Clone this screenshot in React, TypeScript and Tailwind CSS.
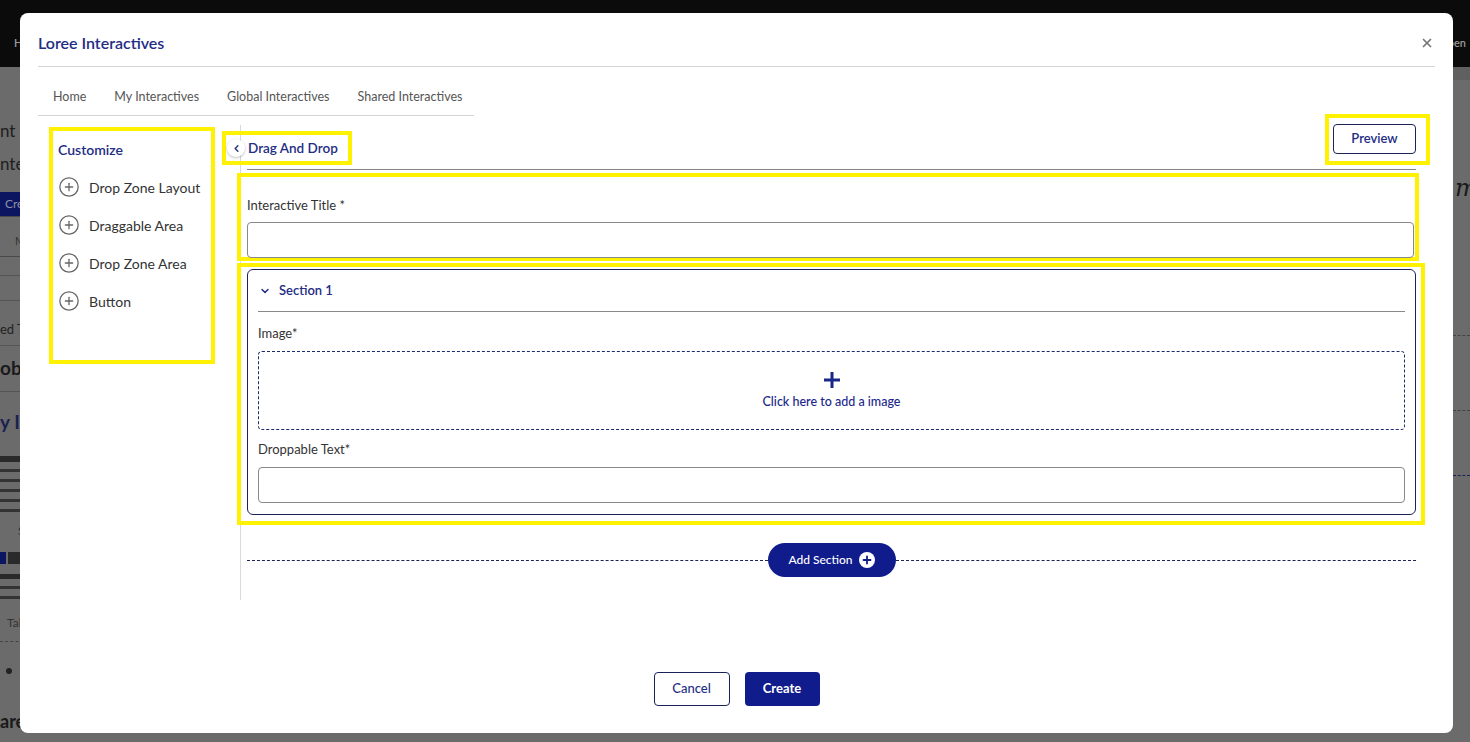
import { ChevronDown, ChevronLeft, CirclePlus, X } from 'lucide-react';

const CUSTOMIZE_ITEMS = ['Drop Zone Layout', 'Draggable Area', 'Drop Zone Area', 'Button'];
const TABS = ['Home', 'My Interactives', 'Global Interactives', 'Shared Interactives'];

function PageBehind() {
  return (
    <div className="flex h-full flex-col">
      <div className="flex h-[67px] shrink-0 items-end justify-between bg-[#0b0b0b] px-[14px] pb-[16px] text-[11px] font-semibold text-[#9a9a9a]">
        <span>H</span>
        <span className="-mr-[10px]">Open</span>
      </div>
      <div className="flex flex-1">
        <div className="flex w-[60px] flex-col text-[#1e1e1e]">
          <div className="mt-[52px] h-[24px] text-[17px] leading-[24px]">nt</div>
          <div className="mt-[8px] h-[26px] text-[17px] leading-[26px]">nte</div>
          <div className="mt-[15px] flex h-[24px] items-center bg-[#0c1660] pl-[5px] text-[12px] text-[#8b8fa8]">Create</div>
          <div className="h-[41px] border-y border-[#4a4a4a] pl-[15px] pt-[16px] text-[11px] text-[#333]">M</div>
          <div className="mt-[18px] h-[26px] border-y border-[#555]" />
          <div className="h-[45px] border-b border-[#555] pt-[20px] text-[13px] leading-[16px] text-[#222]">ed T</div>
          <div className="h-[46px] border-b border-[#555] pt-[9px] text-[19px] font-bold leading-[26px] text-[#1a1a1a]">oba</div>
          <div className="h-[57px] pt-[17px] text-[19px] font-bold leading-[26px] text-[#1b2150]">y Int</div>
          <div className="mt-[7px] flex flex-col gap-[7px]">
            <div className="h-[6px] bg-[#2a2a2a]" />
            <div className="h-[3px] bg-[#333]" />
            <div className="h-[3px] bg-[#333]" />
            <div className="h-[3px] bg-[#333]" />
            <div className="h-[3px] bg-[#333]" />
            <div className="h-[3px] bg-[#333]" />
          </div>
          <div className="mt-[10px] h-[30px] pl-[18px] text-[12px] text-[#333]">S</div>
          <div className="flex h-[12px] gap-[2px]">
            <div className="w-[6px] bg-[#0c1660]" />
            <div className="flex-1 bg-[#2a2a2a]" />
          </div>
          <div className="mt-[10px] flex flex-col gap-[7px]">
            <div className="h-[5px] bg-[#2a2a2a]" />
            <div className="h-[3px] bg-[#333]" />
            <div className="h-[3px] bg-[#333]" />
          </div>
          <div className="mt-[12px] h-[24px] pl-[7px] text-[12px] leading-[24px] text-[#333]">Tab</div>
          <div className="mt-[6px] border-t border-dashed border-[#444]" />
          <div className="mt-[26px] ml-[6px] h-[6px] w-[6px] rounded-full bg-[#222]" />
          <div className="mt-[34px] text-[18px] font-bold text-[#1a1a1a]">are</div>
        </div>
        <div className="flex-1" />
        <div className="flex w-[17px] flex-col">
          <div className="h-[13px] bg-[#606060]" />
          <div className="mt-[96px] pl-[2px] font-['DejaVu_Serif',serif] text-[24px] italic leading-[24px] text-[#1a1a1a]">m</div>
          <div className="mt-[135px] border-t border-dashed border-[#444]" />
          <div className="mt-[74px] border-t border-dashed border-[#444]" />
          <div className="mt-[64px] border-t border-dashed border-[#1b2150]" />
        </div>
      </div>
    </div>
  );
}

function AddIcon() {
  return (
    <svg width="16" height="16" viewBox="0 0 16 16" className="shrink-0">
      <circle cx="8" cy="8" r="8" fill="#ffffff" />
      <path d="M8 4.5v7M4.5 8h7" stroke="#101c8c" strokeWidth="1.8" strokeLinecap="round" />
    </svg>
  );
}

export default function App() {
  return (
    <div className="relative h-[742px] w-[1470px] overflow-hidden bg-[#6b6b6b] font-['Lato',sans-serif]">
      <PageBehind />

      <div className="absolute left-[20px] top-[13px] flex h-[720px] w-[1433px] flex-col rounded-[8px] bg-white">
        <div className="mx-[18px] flex h-[54px] shrink-0 items-end justify-between border-b border-[#d4d4d4] pb-[13px]">
          <h1 className="text-[16px] font-semibold leading-[20px] text-[#232d84]">Loree Interactives</h1>
          <X className="mb-[3px] mr-[1px] h-[14px] w-[14px] text-[#777]" strokeWidth={3} />
        </div>

        <div className="ml-[18px] flex h-[49px] w-[436px] shrink-0 items-end border-b border-[#d4d4d4] pb-[10px] pl-[1px]">
          {TABS.map((tab) => (
            <span key={tab} className="shrink-0 whitespace-nowrap px-[14px] text-[12.5px] leading-[16px] text-[#555]">
              {tab}
            </span>
          ))}
        </div>

        <div className="mx-[18px] flex">
          <div className="w-[202px] shrink-0 pl-[11px] pt-[11px]">
            <div className="h-[237px] w-[166px] border-4 border-[#fff200] pl-[5px] pt-[9px]">
              <h2 className="text-[14px] font-semibold leading-[20px] text-[#232d84]">Customize</h2>
              <ul className="mt-[16px] flex flex-col gap-[16px]">
                {CUSTOMIZE_ITEMS.map((item) => (
                  <li key={item} className="flex h-[22px] items-center gap-[9px]">
                    <CirclePlus className="h-[22px] w-[22px] text-[#666]" strokeWidth={1.4} />
                    <span className="text-[14px] text-[#333]">{item}</span>
                  </li>
                ))}
              </ul>
            </div>
          </div>

          <div className="mt-[9px] h-[475px] flex-1 border-l border-[#d9d9d9] pl-[6px] pr-[19px]">
            <div className="flex h-[45px] items-start justify-between border-b border-[#888]">
              <div className="-ml-[25px] mt-[6px] flex h-[34px] w-[130px] items-center gap-[3px] border-4 border-[#fff200] pl-[1px]">
                <span className="flex h-[18px] w-[18px] items-center justify-center rounded-full bg-white shadow-[0_1px_3px_rgba(0,0,0,0.25)]">
                  <ChevronLeft className="h-[11px] w-[11px] text-[#232d84]" strokeWidth={3} />
                </span>
                <span className="text-[13.5px] font-semibold text-[#232d84]">Drag And Drop</span>
              </div>
              <div className="-mr-[14px] -mt-[11px] h-[51px] w-[105px] border-4 border-[#fff200] pl-[4px] pt-[6px]">
                <button className="flex h-[30px] w-[83px] items-center justify-center rounded-[4px] border border-[#1c2357] text-[13px] font-semibold text-[#232d84]">
                  Preview
                </button>
              </div>
            </div>

            <div className="-ml-[10px] -mr-[3px] mt-[3px] h-[88px] border-4 border-[#fff200] pl-[6px] pr-[1px] pt-[19px]">
              <label className="block text-[13px] leading-[18px] text-[#333]">Interactive Title *</label>
              <div className="mt-[8px] h-[36px] rounded-[4px] border border-[#888]" />
            </div>

            <div className="-ml-[10px] -mr-[9px] mt-[2px] border-4 border-[#fff200] pb-[6px] pl-[6px] pr-[5px] pt-[2px]">
              <div className="rounded-[6px] border border-[#1c2357] px-[10px] pb-[11px]">
                <div className="flex h-[42px] items-center gap-[8px] border-b border-[#888] pl-[1px]">
                  <ChevronDown className="h-[12px] w-[12px] text-[#232d84]" strokeWidth={3} />
                  <span className="text-[13px] font-semibold text-[#232d84]">Section 1</span>
                </div>
                <label className="mt-[12px] block text-[13px] leading-[18px] text-[#333]">Image*</label>
                <div className="mt-[9px] flex h-[79px] flex-col items-center justify-center rounded-[4px] border border-dashed border-[#1c2a6b]">
                  <svg width="20" height="20" viewBox="0 0 20 20">
                    <path d="M10 2v16M2 10h16" stroke="#1b268a" strokeWidth="3" />
                  </svg>
                  <span className="mt-[3px] text-[12.5px] font-medium leading-[18px] text-[#1b268a]">
                    Click here to add a image
                  </span>
                </div>
                <label className="mt-[10px] block text-[13px] leading-[18px] text-[#333]">Droppable Text*</label>
                <div className="mt-[9px] h-[36px] rounded-[4px] border border-[#888]" />
              </div>
            </div>

            <div className="mt-[18px] flex items-center">
              <div className="flex-1 border-t border-dashed border-[#1c2357]" />
              <button className="flex h-[34px] w-[128px] items-center justify-center gap-[6px] rounded-full bg-[#101c8c] text-[12px] font-medium text-white">
                Add Section
                <AddIcon />
              </button>
              <div className="flex-1 border-t border-dashed border-[#1c2357]" />
            </div>
          </div>
        </div>

        <div className="mt-auto flex justify-center gap-[15px] pb-[27px]">
          <button className="h-[34px] w-[76px] rounded-[4px] border border-[#1c2357] text-[13px] font-medium text-[#232d84]">
            Cancel
          </button>
          <button className="h-[34px] w-[75px] rounded-[4px] bg-[#101c8c] text-[13px] font-bold text-white">
            Create
          </button>
        </div>
      </div>
    </div>
  );
}
